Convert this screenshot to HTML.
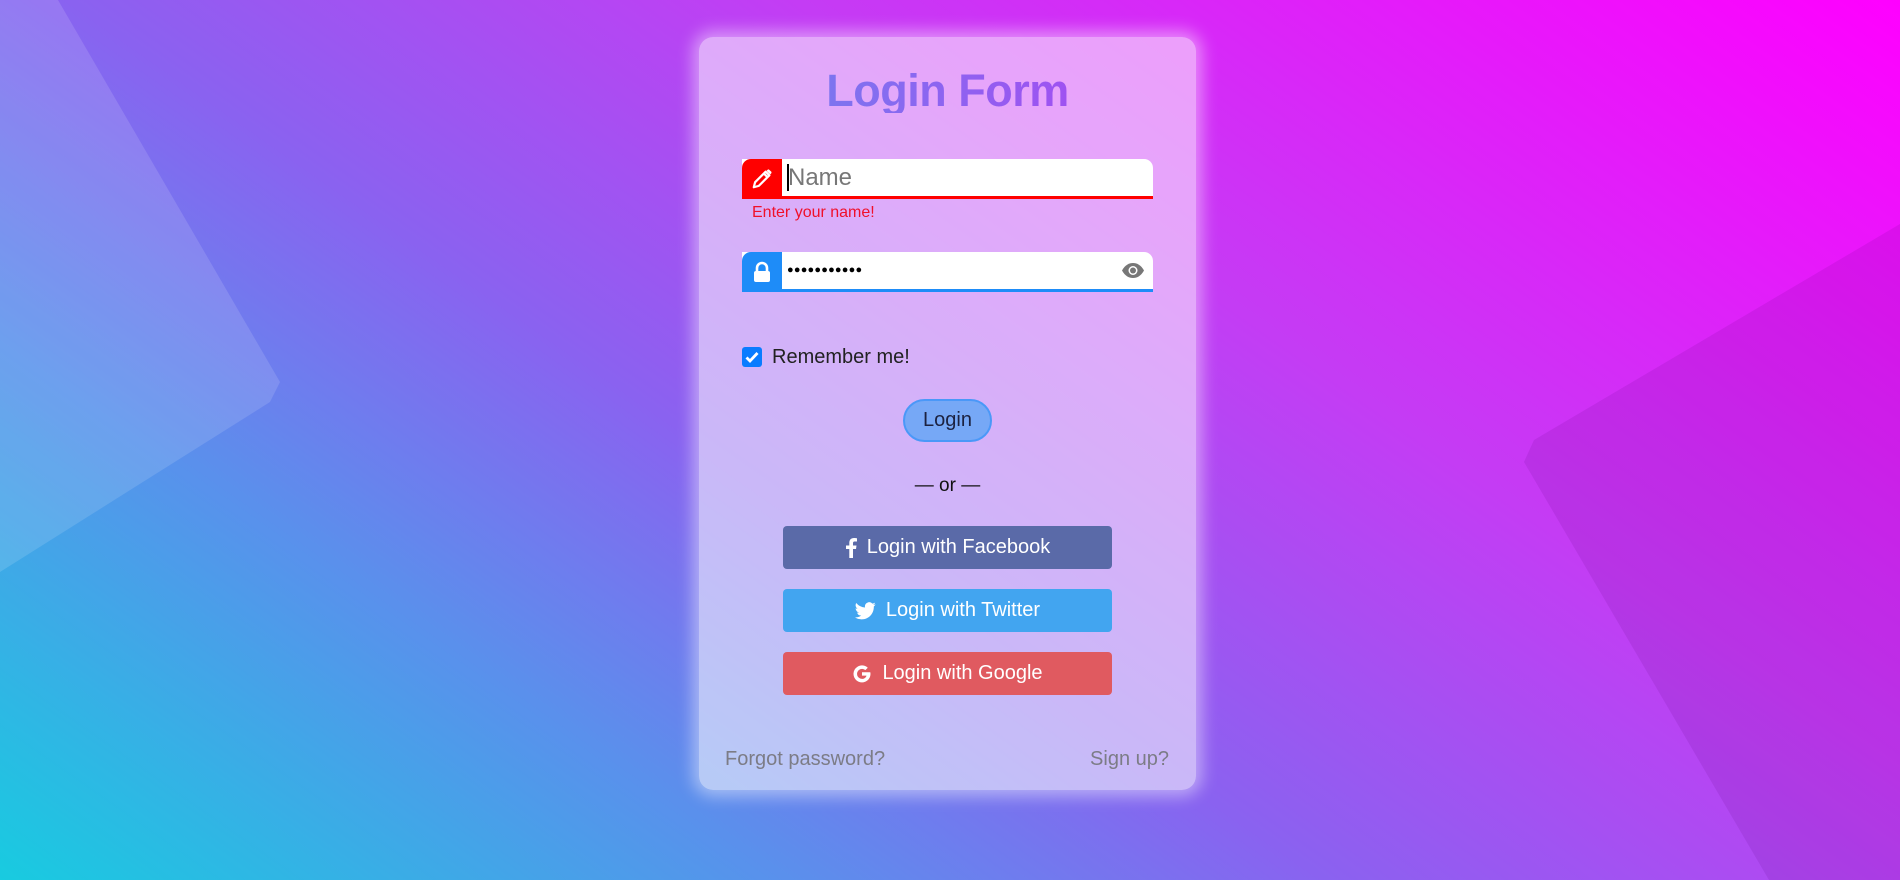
<!DOCTYPE html>
<html><head><meta charset="utf-8"><style>
*{box-sizing:border-box;margin:0;padding:0}
body{width:1900px;height:880px;overflow:hidden;position:relative;font-family:"Liberation Sans",sans-serif;
background:linear-gradient(35deg,#18cbe0 0%,#5a90ec 25%,#8a62f0 42%,#c43cf4 65%,#ff00ff 100%);}
svg.bg{position:absolute;left:0;top:0}
.card{position:absolute;left:699px;top:37px;width:497px;height:753px;border-radius:14px;background:rgba(255,255,255,0.55);box-shadow:0 0 16px 6px rgba(255,255,255,0.45)}
.title{position:absolute;left:0;width:100%;top:31px;line-height:1;text-align:center;font-weight:bold;font-size:45px;letter-spacing:-0.5px;
background:linear-gradient(90deg,#6c86ee,#b040f2);-webkit-background-clip:text;background-clip:text;color:transparent}
.field{position:absolute;left:43px;width:411px;height:40px;background:#fff;border-radius:0 9px 0 0}
.field .ic{position:absolute;left:0;top:0;width:40px;height:40px;border-radius:9px 0 0 0;display:flex;align-items:center;justify-content:center}
.err{position:absolute;left:53px;top:167px;color:#f0102a;font-size:16px}
.cb{position:absolute;left:43px;top:310px;width:20px;height:20px;background:#0a7cff;border-radius:3px}
.rem{position:absolute;left:73px;top:309px;font-size:20px;color:#222}
.login{position:absolute;left:204px;top:362px;width:89px;height:43px;border-radius:22px;background:#76a8f6;border:2px solid #4a98f8;font-size:20px;color:#1c2240;text-align:center;line-height:39px}
.or{position:absolute;left:0;width:100%;top:438px;text-align:center;font-size:19px;color:#111}
.sb{position:absolute;left:84px;width:329px;height:43px;border-radius:4px;color:#fff;font-size:20px;display:flex;align-items:center;justify-content:center;gap:10px}
.foot{position:absolute;top:711px;font-size:20px;color:#7c7c86}
.dots{position:absolute;left:45px;top:13px;font-size:11px;letter-spacing:0.2px;color:#000;line-height:1}
</style></head><body>
<svg class="bg" width="1900" height="880">
<polygon points="58,0 280,382 270,402 0,572 0,0" fill="rgba(255,255,255,0.13)"/>
<polygon points="1900,224 1900,880 1769,880 1524,462 1534,440" fill="rgba(90,0,120,0.12)"/>
</svg>
<div class="card">
<div class="title">Login Form</div>
<div class="field" style="top:122px;border-bottom:3px solid #f00;height:40px">
<div class="ic" style="background:#f00;height:40px"><svg width="22" height="22" viewBox="0 0 24 24"><path d="M3 21l1.5-5.5L16 4l4 4L8.5 19.5z M14 6l4 4" fill="none" stroke="#fff" stroke-width="2.4" stroke-linejoin="round"/><path d="M17 3l4 4 1-1a1.5 1.5 0 0 0 0-2l-2-2a1.5 1.5 0 0 0-2 0z" fill="#fff"/></svg></div>
<div style="position:absolute;left:45px;top:5px;width:1.5px;height:27px;background:#000"></div>
<div style="position:absolute;left:46px;top:5px;font-size:24px;color:#777">Name</div>
</div>
<div class="err">Enter your name!</div>
<div class="field" style="top:215px;border-bottom:3px solid #1e8cf8">
<div class="ic" style="background:#1e8cf8"><svg width="20" height="22" viewBox="0 0 20 22"><path d="M5 10V7a5 5 0 0 1 10 0v3" fill="none" stroke="#fff" stroke-width="2.6"/><rect x="2" y="10" width="16" height="11" rx="2" fill="#fff"/></svg></div>
<div class="dots">●●●●●●●●●●●</div>
<svg style="position:absolute;right:8px;top:10px" width="24" height="17" viewBox="0 0 24 17"><path d="M1 8.5C4 3 8 1 12 1s8 2 11 7.5C20 14 16 16 12 16S4 14 1 8.5z" fill="#777"/><circle cx="12" cy="8.5" r="4.5" fill="#fff"/><circle cx="12" cy="8.5" r="3" fill="#777"/></svg>
</div>
<div class="cb"><svg width="20" height="20" viewBox="0 0 20 20"><path d="M4.5 10.5l3.5 3.5 7.5-8" fill="none" stroke="#fff" stroke-width="2.8"/></svg></div>
<div class="rem">Remember me!</div>
<div class="login">Login</div>
<div class="or">— or —</div>
<div class="sb" style="top:489px;background:#5a6aa8"><svg width="12" height="21" viewBox="0 0 12 21"><path d="M8 21V12h3l.5-3.5H8V6.3c0-1 .3-1.8 1.8-1.8H12V1.3C11.6 1.2 10.4 1 9 1 6 1 4.3 2.8 4.3 6v2.5H1V12h3.3v9z" fill="#fff"/></svg>Login with Facebook</div>
<div class="sb" style="top:552px;background:#42a5f0"><svg width="21" height="18" viewBox="0 0 24 20"><path d="M23.6 2.3a9.6 9.6 0 0 1-2.8.8A4.9 4.9 0 0 0 23 .4a9.7 9.7 0 0 1-3.1 1.2A4.9 4.9 0 0 0 11.5 6 13.9 13.9 0 0 1 1.4.9a4.9 4.9 0 0 0 1.5 6.6 4.9 4.9 0 0 1-2.2-.6 4.9 4.9 0 0 0 3.9 4.8 4.9 4.9 0 0 1-2.2.1 4.9 4.9 0 0 0 4.6 3.4A9.9 9.9 0 0 1 0 17.3 13.9 13.9 0 0 0 7.5 19.5c9.1 0 14-7.5 14-14v-.6a10 10 0 0 0 2.1-2.6z" fill="#fff"/></svg>Login with Twitter</div>
<div class="sb" style="top:615px;background:#e05a60"><svg width="20" height="20" viewBox="0 0 20 20"><path d="M17.8 8.2H10v3.4h4.5c-.5 2-2.2 3.3-4.5 3.3a5 5 0 0 1 0-10c1.3 0 2.4.5 3.3 1.2l2.5-2.4A8.5 8.5 0 1 0 18.5 10c0-.6-.1-1.2-.2-1.8z" fill="#fff"/></svg>Login with Google</div>
<div class="foot" style="left:26px">Forgot password?</div>
<div class="foot" style="right:27px">Sign up?</div>
</div>
</body></html>
